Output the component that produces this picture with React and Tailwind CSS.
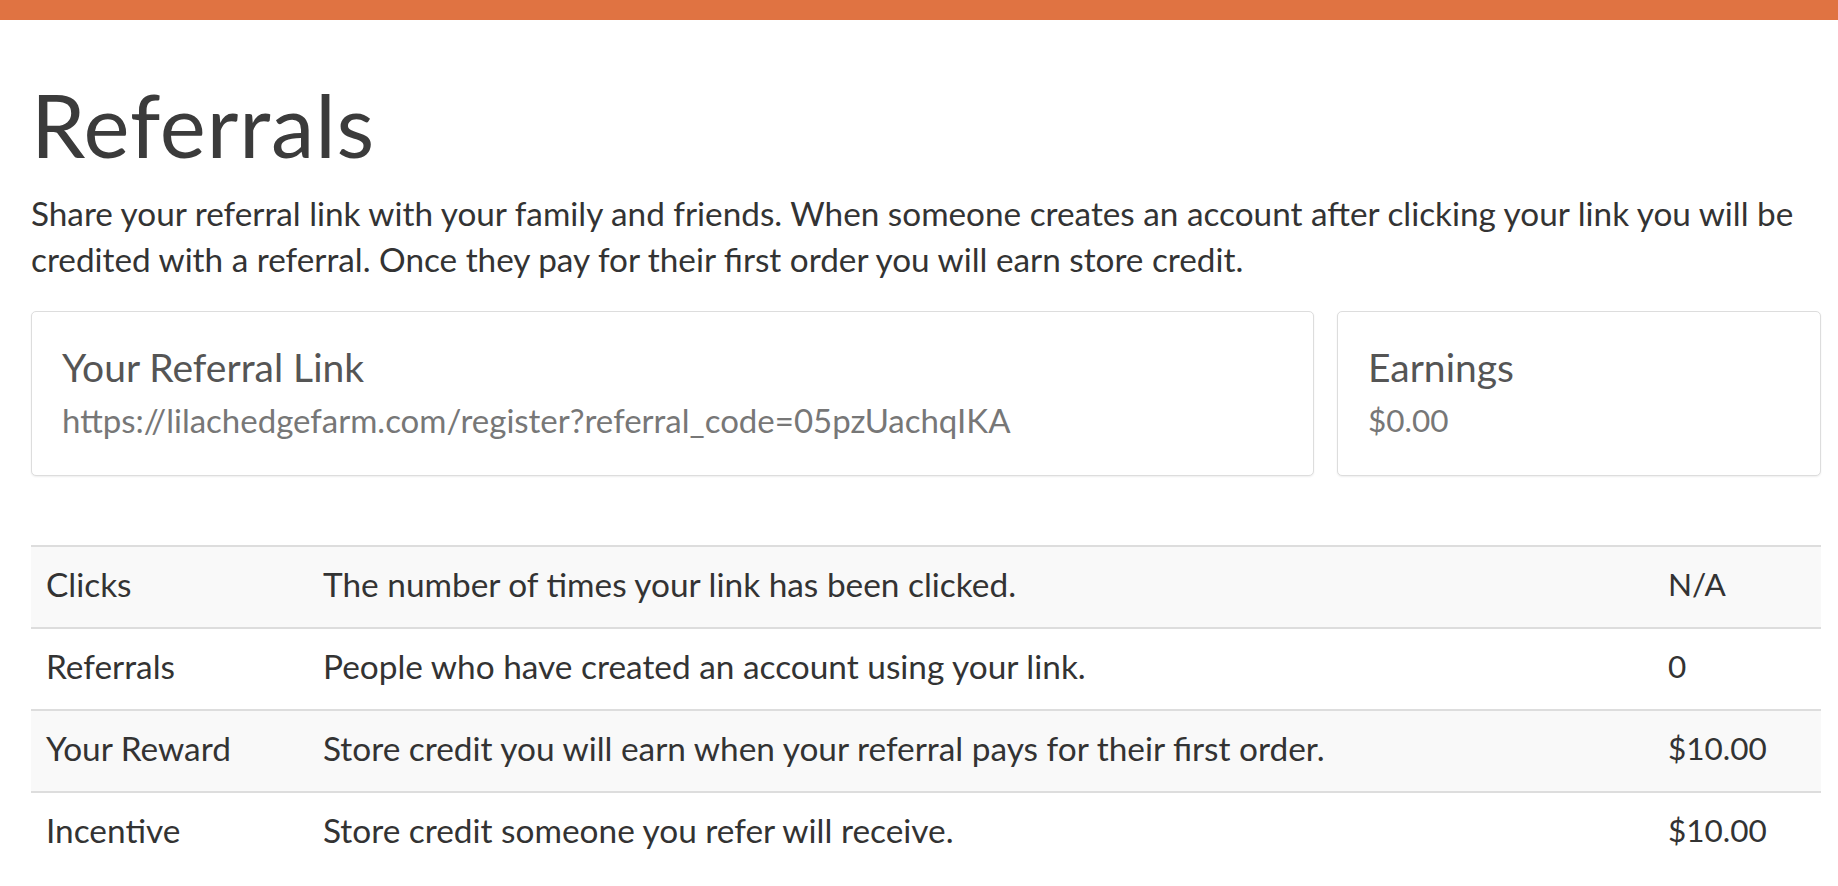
import React from "react";

const stats = [
  { label: "Clicks", desc: "The number of times your link has been clicked.", value: "N/A" },
  { label: "Referrals", desc: "People who have created an account using your link.", value: "0" },
  { label: "Your Reward", desc: "Store credit you will earn when your referral pays for their first order.", value: "$10.00" },
  { label: "Incentive", desc: "Store credit someone you refer will receive.", value: "$10.00" },
];

function StatCard({ title, value, valueSize, className }) {
  return (
    <div className={`h-[165px] rounded-[5px] border border-[#dddddd] bg-white px-[30px] pt-[32px] shadow-[0_1px_2px_rgba(0,0,0,0.07)] ${className}`}>
      <h3 className="text-[39px] leading-[46px] text-[#555555]">{title}</h3>
      <p className={`mt-[10px] leading-[40px] text-[#777777] ${valueSize}`}>{value}</p>
    </div>
  );
}

export default function App() {
  return (
    <div className="min-h-screen bg-white font-['Lato',sans-serif] text-[#333333]">
      <div className="h-[20px] bg-[#e07342]" />

      <main className="ml-[31px] w-[1790px]">
        <h1 className="mt-[62px] text-[87px] leading-[86px] tracking-[0.01em] text-[#3b3b3b]">Referrals</h1>

        <p className="mt-[22px] text-[33.3px] leading-[46px]">
          Share your referral link with your family and friends. When someone creates an account after clicking your link you will be
          <br />
          credited with a referral. Once they pay for their first order you will earn store credit.
        </p>

        <div className="mt-[29px] flex gap-[23px]">
          <StatCard
            className="w-[1283px]"
            valueSize="text-[33px]"
            title="Your Referral Link"
            value="https://lilachedgefarm.com/register?referral_code=05pzUachqIKA"
          />
          <StatCard className="flex-1" valueSize="text-[31.5px]" title="Earnings" value="$0.00" />
        </div>

        <div className="mt-[69px]">
          {stats.map((row, i) => (
            <div
              key={row.label}
              className={`grid h-[82px] grid-cols-[277px_1fr_168px] items-center border-t-2 border-[#dddddd] pb-[5px] text-[33.4px] ${
                i % 2 === 0 ? "bg-[#f9f9f9]" : "bg-white"
              }`}
            >
              <div className="pl-[15px]">{row.label}</div>
              <div className="pl-[15px]">{row.desc}</div>
              <div className="pl-[15px] text-[31.5px]">{row.value}</div>
            </div>
          ))}
        </div>
      </main>
    </div>
  );
}
